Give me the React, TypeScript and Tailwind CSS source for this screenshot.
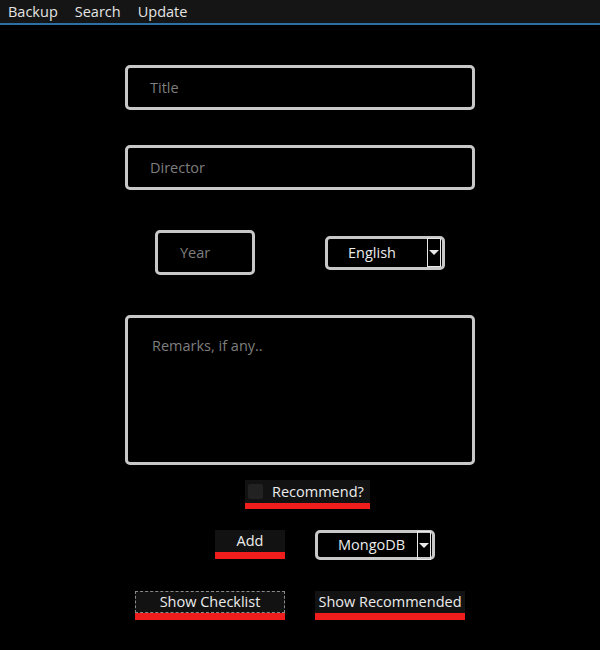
import React from "react";

const font = { fontFamily: '"Open Sans", "Noto Sans", sans-serif' };

const Combo = ({ label, w }: { label: string; w: string }) => (
  <div
    className={`flex items-center justify-between rounded-[5px] border-[3px] border-[#c8c8c8] bg-black pl-[20px] pr-[1px] ${w}`}
  >
    <span className="text-[14.5px] text-[#ececec]">{label}</span>
    <div className="flex h-[29px] w-[14px] items-center justify-center border border-[#e8e8e8]">
      <div className="h-0 w-0 border-x-[5px] border-t-[5px] border-x-transparent border-t-[#e8e8e8]" />
    </div>
  </div>
);

const RedButton = ({
  label,
  w,
  dashed,
}: {
  label: string;
  w: string;
  dashed?: boolean;
}) => (
  <div className={`flex flex-col ${w}`}>
    <div
      className={`flex h-[22px] items-center justify-center bg-[#121212] text-[14.5px] text-[#ececec] ${
        dashed ? "border border-dashed border-[#8a8a8a]" : ""
      }`}
    >
      {label}
    </div>
    <div className="h-[7px] bg-[#f01d1d]" />
  </div>
);

export default function App() {
  return (
    <div className="h-[650px] w-[600px] bg-black" style={font}>
      <div className="flex h-[23px] items-center gap-[17px] bg-[#151515] px-[8px] text-[14.5px] text-[#e4e4e4]">
        <span>Backup</span>
        <span>Search</span>
        <span>Update</span>
      </div>
      <div className="h-[2px] bg-[#2a6fa6]" />

      <div className="flex flex-col items-center pt-[40px]">
        <div className="flex h-[45px] w-[350px] items-center rounded-[5px] border-[3px] border-[#c8c8c8] pl-[22px] text-[14.5px] text-[#7e7e7e]">
          Title
        </div>
        <div className="mt-[35px] flex h-[45px] w-[350px] items-center rounded-[5px] border-[3px] border-[#c8c8c8] pl-[22px] text-[14.5px] text-[#7e7e7e]">
          Director
        </div>

        <div className="mt-[40px] flex w-[290px] items-center justify-between">
          <div className="flex h-[45px] w-[100px] items-center rounded-[5px] border-[3px] border-[#c8c8c8] pl-[22px] text-[14.5px] text-[#7e7e7e]">
            Year
          </div>
          <Combo label="English" w="w-[120px] h-[34px]" />
        </div>

        <div className="mt-[40px] h-[150px] w-[350px] rounded-[5px] border-[3px] border-[#c8c8c8] pl-[24px] pt-[17px] text-[14.5px] text-[#7e7e7e]">
          Remarks, if any..
        </div>

        <div className="ml-[15px] mt-[15px] flex w-[125px] flex-col">
          <div className="flex h-[23px] items-center bg-[#121212] pl-[3px] text-[14.5px] text-[#ececec]">
            <div className="h-[15px] w-[15px] rounded-[2px] bg-[#222222]" />
            <span className="ml-[9px]">Recommend?</span>
          </div>
          <div className="h-[6px] bg-[#f01d1d]" />
        </div>

        <div className="ml-[50px] mt-[21px] flex w-[220px] items-start justify-between">
          <RedButton label="Add" w="w-[70px]" />
          <Combo label="MongoDB" w="w-[120px] h-[30px]" />
        </div>

        <div className="mt-[31px] flex w-[330px] items-start justify-between">
          <RedButton label="Show Checklist" w="w-[150px]" dashed />
          <RedButton label="Show Recommended" w="w-[150px]" />
        </div>
      </div>
    </div>
  );
}
